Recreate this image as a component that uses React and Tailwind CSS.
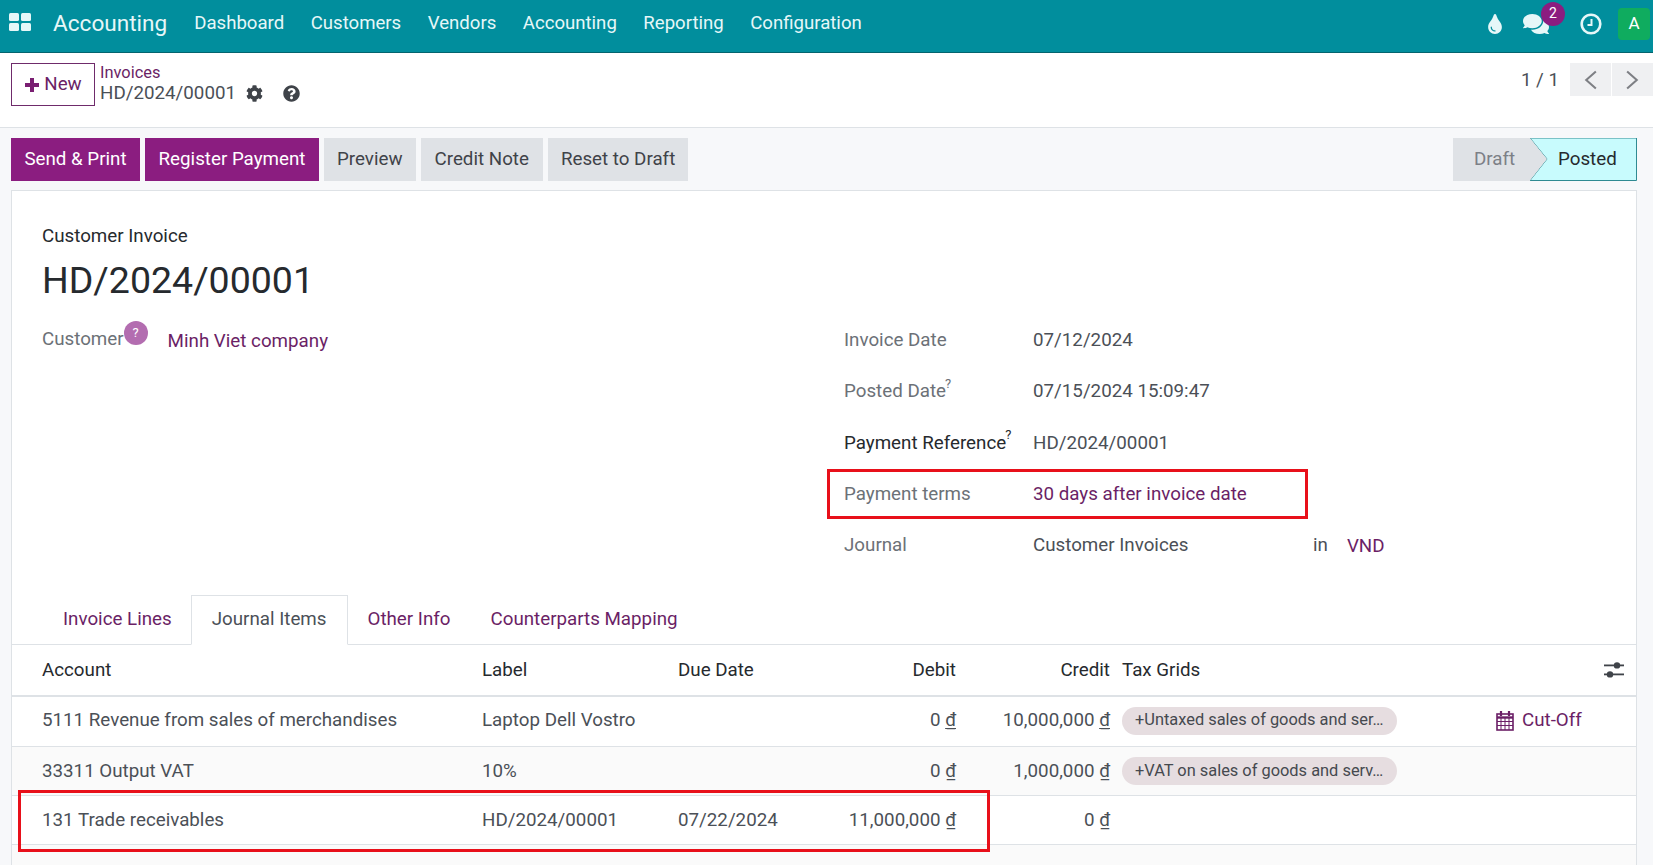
import { FaCog, FaComments, FaQuestionCircle, FaTint } from 'react-icons/fa'

const NAV = ['Dashboard', 'Customers', 'Vendors', 'Accounting', 'Reporting', 'Configuration']
const TABS = [
  { label: 'Invoice Lines' },
  { label: 'Journal Items', active: true },
  { label: 'Other Info' },
  { label: 'Counterparts Mapping' },
]
const ROW_GRID = 'grid grid-cols-[470px_196px_120px_170px_154px_374px_1fr]'

function AppsIcon() {
  return (
    <svg viewBox="0 0 22 18" className="h-[18px] w-[22px]" fill="#e6f7f8">
      <rect x="0" y="0" width="10" height="8" rx="1.5" />
      <rect x="12" y="0" width="10" height="8" rx="1.5" />
      <rect x="0" y="10" width="10" height="8" rx="1.5" />
      <rect x="12" y="10" width="10" height="8" rx="1.5" />
    </svg>
  )
}

function ClockIcon() {
  return (
    <svg viewBox="0 0 22 22" className="h-[22px] w-[22px]" fill="none" stroke="#e6f7f8">
      <circle cx="11" cy="11" r="9.3" strokeWidth="2.6" />
      <path d="M11.5 6v6H7.5" strokeWidth="2" />
    </svg>
  )
}

function PlusIcon() {
  return (
    <svg viewBox="0 0 16 16" className="h-4 w-4" fill="#7a1f72">
      <path d="M6 1h4v5h5v4h-5v5H6v-5H1V6h5z" />
    </svg>
  )
}

function CalendarIcon() {
  return (
    <svg viewBox="0 0 18 21" className="h-[21px] w-[18px]" fill="none" stroke="#6b1f66">
      <rect x="1" y="4" width="16" height="16" strokeWidth="1.6" />
      <path d="M1 7.5h16" strokeWidth="2.4" />
      <path d="M1 11.5h16M1 15.5h16M5 8v12M9 8v12M13 8v12" strokeWidth="1" />
      <path d="M5 1v5M13 1v5" strokeWidth="2.2" />
    </svg>
  )
}

function Chevron({ left }) {
  return (
    <svg viewBox="0 0 14 20" className="h-[22px] w-[15px]" fill="none" stroke="#7d7f84" strokeWidth="1.9">
      <path d={left ? 'M12 2 3 10l9 8' : 'M2 2l9 8-9 8'} />
    </svg>
  )
}

function SlidersIcon() {
  return (
    <svg viewBox="0 0 20 18" className="h-[18px] w-5" fill="#3f4349">
      <rect x="0" y="3.5" width="20" height="1.8" />
      <rect x="0" y="12.5" width="20" height="1.8" />
      <circle cx="13" cy="4.4" r="3.2" />
      <circle cx="6" cy="13.4" r="3.2" />
    </svg>
  )
}

function Money({ value }) {
  return (
    <>
      {value} <span className="underline underline-offset-2">₫</span>
    </>
  )
}

function Field({ label, strong, help, children }) {
  return (
    <div className="flex h-[51.4px] items-center">
      <div className={`w-[189px] ${strong ? 'text-[#262a2e]' : 'text-[#6c7177]'}`}>
        {label}
        {help && <sup className="top-[-0.7em] -ml-px text-[13px] leading-none">?</sup>}
      </div>
      {children}
    </div>
  )
}

function Pill({ children }) {
  return (
    <span className="flex h-[28px] w-[275px] items-center whitespace-nowrap rounded-full bg-[#e6dde0] px-[13px] text-[16.4px] text-[#45494f]">
      {children}
    </span>
  )
}

function Row({ account, label, due, debit, credit, tag, cutoff, shaded, height = 'h-[49px]' }) {
  return (
    <div className={`${ROW_GRID} ${height} items-center border-b border-[#dee2e6] ${shaded ? 'bg-[#fafafa]' : ''}`}>
      <div className="pl-[30px]">{account}</div>
      <div>{label}</div>
      <div>{due}</div>
      <div className="pr-3 text-right"><Money value={debit} /></div>
      <div className="pr-3 text-right"><Money value={credit} /></div>
      <div>{tag && <Pill>{tag}</Pill>}</div>
      <div>
        {cutoff && (
          <span className="flex items-center gap-2 text-[#6b1f66]">
            <CalendarIcon />
            Cut-Off
          </span>
        )}
      </div>
    </div>
  )
}

export default function App() {
  return (
    <div className="relative h-[865px] overflow-hidden bg-[#f7f8fa] font-['Roboto',sans-serif] text-[18.75px] text-[#4b5057]">
      <header className="flex h-[53px] items-center border-b border-[#04646e] bg-[#018e9d] pb-[5px] pl-[9px] text-[#e6f7f8]">
        <div className="-mt-[4px]"><AppsIcon /></div>
        <span className="ml-[22px] mr-[27px] text-[22.6px]">Accounting</span>
        <nav className="flex gap-[26.5px] text-[18.6px]">
          {NAV.map((item) => (
            <span key={item}>{item}</span>
          ))}
        </nav>
        <div className="ml-auto flex items-center pr-[3px]">
          <FaTint className="text-[20px]" />
          <div className="relative ml-[18px] mr-[31px]">
            <FaComments className="text-[26px]" />
            <span className="absolute left-[18px] top-[-9px] flex h-[24px] w-[24px] items-center justify-center rounded-full bg-[#8b1d80] text-[14px] text-white">2</span>
          </div>
          <ClockIcon />
          <span className="ml-[16px] mt-[1px] flex h-8 w-8 items-center justify-center rounded bg-[#0fac5f] text-[17px] text-white">A</span>
        </div>
      </header>

      <div className="flex h-[75px] border-b border-[#dee2e6] bg-white pl-[11px] pt-[10px]">
        <button className="flex h-[43px] w-[84px] items-center justify-center gap-[4px] border border-[#6f2b6b] text-[#6b1f66]">
          <PlusIcon />
          New
        </button>
        <div className="ml-[5px] -mt-px leading-[21px]">
          <div className="text-[16.4px] text-[#6b1f66]">Invoices</div>
          <div className="flex items-center">
            HD/2024/00001
            <FaCog className="ml-[10px] text-[17px] text-[#3f4349]" />
            <FaQuestionCircle className="ml-[20px] text-[17px] text-[#3f4349]" />
          </div>
        </div>
        <div className="ml-auto flex items-start">
          <span className="mt-[3px] mr-[11px]">1 / 1</span>
          <span className="flex h-[33px] w-[41px] items-center justify-center bg-[#eff0f2]"><Chevron left /></span>
          <span className="ml-px flex h-[33px] w-[41px] items-center justify-center bg-[#eff0f2]"><Chevron /></span>
        </div>
      </div>

      <div className="flex h-[62px] items-start pl-[11px] pt-[10px]">
        <button className="h-[43px] w-[129px] bg-[#8b1d80] text-white">Send &amp; Print</button>
        <button className="ml-[5px] h-[43px] w-[174px] bg-[#8b1d80] text-white">Register Payment</button>
        <button className="ml-[5px] h-[43px] bg-[#dfe2e6] px-[13px] text-[#3f4349]">Preview</button>
        <button className="ml-[5px] h-[43px] bg-[#dfe2e6] px-[14px] text-[#3f4349]">Credit Note</button>
        <button className="ml-[5px] h-[43px] bg-[#dfe2e6] px-[13px] text-[#3f4349]">Reset to Draft</button>
        <div className="ml-auto mr-4 flex h-[43px] w-[184px]">
          <span className="flex w-[77px] items-center bg-[#dfe2e6] pl-[21px] text-[#7c8086]">Draft</span>
          <span className="relative flex flex-1 items-center pl-[28px] text-[#262a2e]">
            <svg viewBox="0 0 107 43" className="absolute inset-0 h-full w-full" preserveAspectRatio="none">
              <path d="M0 0H106.5V42.5H0L17 21Z" fill="#c8fbfd" stroke="#2f8a92" />
              <path d="M0 0 17 21 0 42.5H-1V0Z" fill="#dfe2e6" />
            </svg>
            <span className="relative">Posted</span>
          </span>
        </div>
      </div>

      <main className="ml-[11px] mr-4 h-[675px] border border-[#dee2e6] bg-white">
        <div className="h-[404px] px-[30px] pt-[31px]">
          <div className="text-[#262a2e]">Customer Invoice</div>
          <h1 className="mt-[5px] text-[37.5px] leading-[50px] text-[#262a2e]">HD/2024/00001</h1>
          <div className="flex">
            <div className="w-[802px] pt-[17px]">
              <div className="flex items-start">
                <span className="mt-[3px] text-[#6c7177]">Customer</span>
                <span className="mt-[-1px] flex h-6 w-6 items-center justify-center rounded-full bg-[#b36db0] text-[13px] text-white">?</span>
                <span className="ml-[20px] mt-[5px] text-[#6b1f66]">Minh Viet company</span>
              </div>
            </div>
            <div className="w-[560px] pt-[9px] text-[#4b5057]">
              <Field label="Invoice Date"><span>07/12/2024</span></Field>
              <Field label="Posted Date" help><span>07/15/2024 15:09:47</span></Field>
              <Field label="Payment Reference" help strong><span>HD/2024/00001</span></Field>
              <Field label="Payment terms"><span className="text-[#6b1f66]">30 days after invoice date</span></Field>
              <Field label="Journal">
                <span className="w-[280px]">Customer Invoices</span>
                <span>in</span>
                <span className="ml-[19px] mt-[2px] text-[#6b1f66]">VND</span>
              </Field>
            </div>
          </div>
        </div>

        <div className="flex h-[50px] border-b border-[#dee2e6] pl-[31px] text-[#6b1f66]">
          {TABS.map((t) => (
            <span
              key={t.label}
              className={`flex items-center px-[20px] ${t.active ? 'mb-[-1px] -ml-px border border-[#dee2e6] border-b-white bg-white pb-px text-[#4b5057]' : ''}`}
            >
              {t.label}
            </span>
          ))}
        </div>

        <div className={`${ROW_GRID} h-[52px] items-center border-b-2 border-[#dee2e6] text-[#262a2e]`}>
          <div className="pl-[30px]">Account</div>
          <div>Label</div>
          <div>Due Date</div>
          <div className="pr-3 text-right">Debit</div>
          <div className="pr-3 text-right">Credit</div>
          <div>Tax Grids</div>
          <div className="flex justify-end pr-[12px]"><SlidersIcon /></div>
        </div>
        <Row account="5111 Revenue from sales of merchandises" label="Laptop Dell Vostro" debit="0" credit="10,000,000" tag="+Untaxed sales of goods and ser…" cutoff height="h-[50px] pb-[2px]" />
        <Row account="33311 Output VAT" label="10%" debit="0" credit="1,000,000" tag="+VAT on sales of goods and serv…" shaded />
        <Row account="131 Trade receivables" label="HD/2024/00001" due="07/22/2024" debit="11,000,000" credit="0" />
        <div className="h-full bg-[#fafafa]" />
      </main>

      {/* red annotation boxes drawn over the screenshot */}
      <div className="pointer-events-none absolute left-[827px] top-[469px] h-[50px] w-[481px] border-[3px] border-[#e8101a]" />
      <div className="pointer-events-none absolute left-[18px] top-[790px] h-[62px] w-[972px] border-[3px] border-[#e8101a]" />
    </div>
  )
}
